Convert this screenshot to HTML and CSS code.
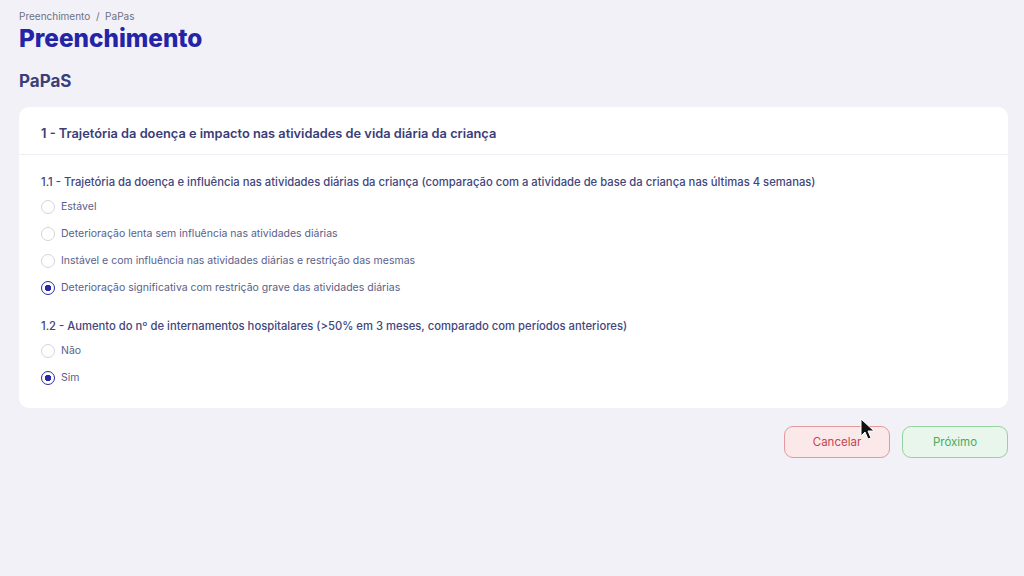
FILE: index.html
```html
<!DOCTYPE html>
<html>
  <head>
    <title>Preenchimento - PaPaS</title>
    <link rel="stylesheet" href="styles.css">
  </head>
  <body>
    <div class="page">
      <nav class="breadcrumb">Preenchimento&nbsp; / &nbsp;PaPas</nav>
      <h1 class="page__title">Preenchimento</h1>
      <h2 class="page__subtitle">PaPaS</h2>

      <section class="card">
        <header class="card__header">1 - Trajetória da doença e impacto nas atividades de vida diária da criança</header>
        <div class="card__body">
          <div class="question">
            <p class="question__label">1.1 - Trajetória da doença e influência nas atividades diárias da criança (comparação com a atividade de base da criança nas últimas 4 semanas)</p>
            <label class="option"><input type="radio" name="q11"> Estável</label>
            <label class="option"><input type="radio" name="q11"> Deterioração lenta sem influência nas atividades diárias</label>
            <label class="option"><input type="radio" name="q11"> Instável e com influência nas atividades diárias e restrição das mesmas</label>
            <label class="option"><input type="radio" name="q11" checked> Deterioração significativa com restrição grave das atividades diárias</label>
          </div>
          <div class="question">
            <p class="question__label">1.2 - Aumento do nº de internamentos hospitalares (&gt;50% em 3 meses, comparado com períodos anteriores)</p>
            <label class="option"><input type="radio" name="q12"> Não</label>
            <label class="option"><input type="radio" name="q12" checked> Sim</label>
          </div>
        </div>
      </section>

      <div class="actions">
        <button class="btn btn--cancel">Cancelar</button>
        <button class="btn btn--next">Próximo</button>
        <svg class="cursor" width="16" height="24" viewBox="0 0 16 24">
          <path d="M1 1 L1 18 L5 14 L8 21 L11 20 L8 13 L14 13 Z" fill="#111" stroke="#fff" stroke-width="1"/>
        </svg>
      </div>
    </div>
  </body>
</html>
```

FILE: styles.css
```css
body { margin: 0; background: #f2f1f7; font-family: Inter, "Noto Sans", sans-serif; }

.page {
  display: flex;
  flex-flow: column nowrap;
  padding: 9px 16px 0 19px;
}

.breadcrumb { font-size: 10px; color: #6d7086; line-height: 14px; }

.page__title {
  margin: 0;
  font-size: 24.3px;
  line-height: 30px;
  font-weight: 800;
  color: #2424a6;
}

.page__subtitle {
  margin: 16px 0 0;
  font-size: 17px;
  line-height: 24px;
  font-weight: 700;
  color: #3b3e78;
}

.card {
  margin-top: 14px;
  background: #fff;
  border-radius: 10px;
}
.card__header {
  padding: 19px 22px 0;
  height: 28px;
  display: flex;
  align-items: flex-start;
  line-height: 16px;
  border-bottom: 1px solid #efeef4;
  font-size: 12.8px;
  font-weight: 600;
  color: #3a3d78;
}
.card__body {
  display: flex;
  flex-flow: column nowrap;
  gap: 16px;
  padding: 18px 22px 17px;
}

.question { display: flex; flex-flow: column nowrap; }
.question__label {
  margin: 0 0 2px;
  font-size: 11.25px;
  line-height: 18px;
  font-weight: 500;
  color: #42467c;
}

.option {
  display: flex;
  align-items: center;
  gap: 6px;
  height: 27px;
  font-size: 10.5px;
  color: #5a5e8a;
}
.option input {
  appearance: none;
  margin: 0;
  width: 14px;
  height: 14px;
  border: 1px solid #d4d4dc;
  border-radius: 50%;
  background: #fff;
}
.option input:checked {
  border: 1.5px solid #2a2aa8;
  background: radial-gradient(circle, #2a2aa8 0 3px, #fff 3.5px);
}

.actions {
  position: relative;
  display: flex;
  justify-content: flex-end;
  gap: 12px;
  margin-top: 18px;
}
.btn {
  width: 106px;
  height: 32px;
  border-radius: 9px;
  font-family: Inter, sans-serif;
  font-size: 11.5px;
}
.btn--cancel { background: #fbe9ea; border: 1px solid #e29a9f; color: #c6454f; }
.btn--next { background: #e9f6eb; border: 1px solid #94d3a0; color: #4aab5c; }

.cursor { position: absolute; left: 841px; top: -8px; }
```
